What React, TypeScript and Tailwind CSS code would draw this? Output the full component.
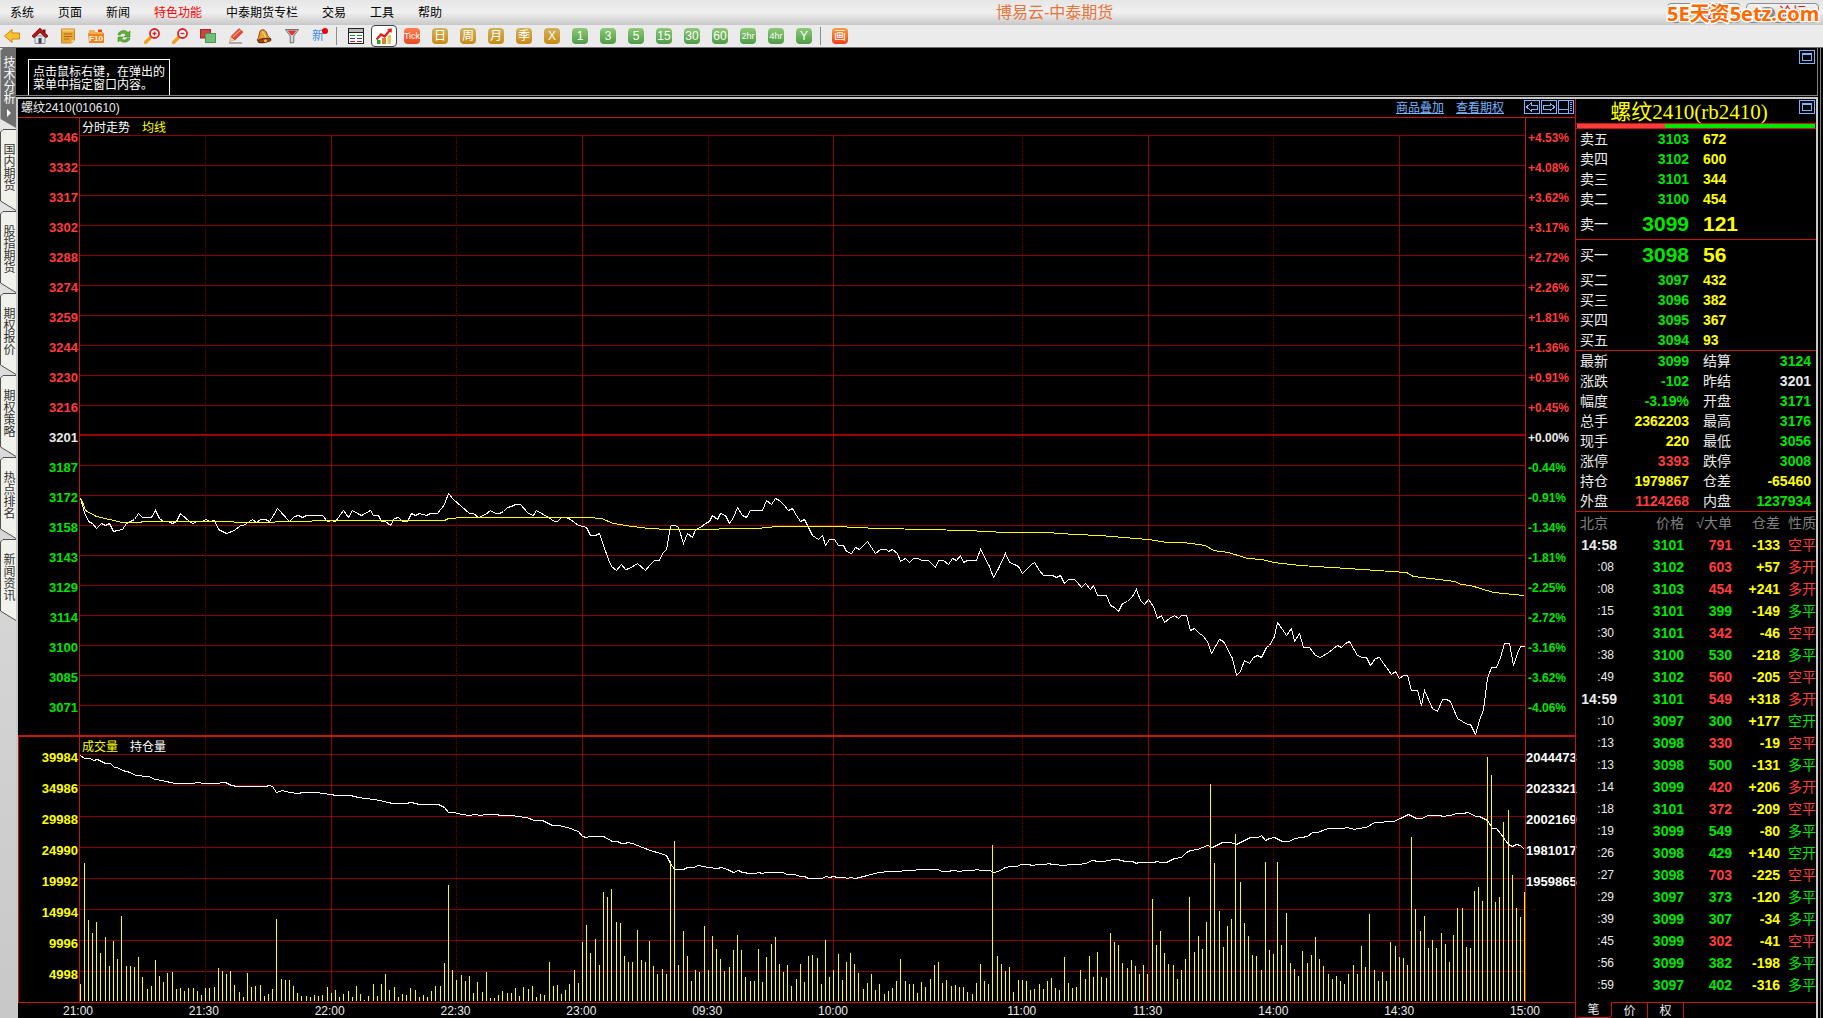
import React, { useState } from 'react';

type Tone = 'up' | 'down' | 'flat' | 'num';

const TONES: Record<Tone, string> = {
  up: 'text-[#ff3c3c]',
  down: 'text-[#00e600]',
  flat: 'text-[#ebebeb]',
  num: 'text-[#ffff00]',
};

const menuItems = ['系统', '页面', '新闻', '特色功能', '中泰期货专栏', '交易', '工具', '帮助'];

const sideTabs = ['国内期货', '股指期货', '期权报价', '期权策略', '热点排名', '新闻资讯'];

const priceScale = [3346, 3332, 3317, 3302, 3288, 3274, 3259, 3244, 3230, 3216, 3201, 3187, 3172, 3158, 3143, 3129, 3114, 3100, 3085, 3071];
const percentScale = ['+4.53%', '+4.08%', '+3.62%', '+3.17%', '+2.72%', '+2.26%', '+1.81%', '+1.36%', '+0.91%', '+0.45%', '+0.00%', '-0.44%', '-0.91%', '-1.34%', '-1.81%', '-2.25%', '-2.72%', '-3.16%', '-3.62%', '-4.06%'];
const volumeScale = [39984, 34986, 29988, 24990, 19992, 14994, 9996, 4998];
const interestScale = [2044473, 2023321, 2002169, 1981017, 1959865];

// minutes = trading minutes until the next label
const timeScale = [
  { label: '21:00', minutes: 30 },
  { label: '21:30', minutes: 30 },
  { label: '22:00', minutes: 30 },
  { label: '22:30', minutes: 30 },
  { label: '23:00', minutes: 30 },
  { label: '09:30', minutes: 30 },
  { label: '10:00', minutes: 45 },
  { label: '11:00', minutes: 30 },
  { label: '11:30', minutes: 30 },
  { label: '14:00', minutes: 30 },
  { label: '14:30', minutes: 30 },
  { label: '15:00', minutes: 0 },
];

const solidLines = [331, 582, 833, 1148, 1399];
const dottedLines = [205, 456, 708, 1022, 1273];

const pricePoints = '80,498 84,512 88,521 92,523 96,528 101,523 105,525 109,523 113,531 117,530 122,529 126,523 134,519 138,513 142,517 151,517 155,510 159,518 163,521 168,521 172,523 176,521 180,513 189,521 192,523 197,521 202,521 205,519 210,521 214,520 218,529 226,533 234,530 240,525 243,525 252,519 256,522 260,519 265,519 269,521 273,515 277,508 289,521 294,516 298,515 302,517 306,515 322,515 327,521 331,520 335,521 343,510 348,517 352,510 357,513 361,515 370,510 373,515 378,515 381,521 385,521 390,525 394,518 398,517 402,521 407,521 411,513 415,515 419,513 426,515 430,513 437,513 444,504 448,493 453,499 469,513 473,513 478,517 485,514 490,510 495,513 499,513 503,511 507,507 511,506 515,504 520,504 528,513 533,515 536,510 541,513 548,517 554,521 557,521 561,517 566,517 570,519 578,525 583,526 586,527 590,535 595,535 599,533 603,545 608,559 611,566 616,570 621,564 625,569 629,568 637,563 645,570 650,564 654,560 659,560 662,553 666,549 670,526 671,525 675,525 678,527 683,543 687,533 692,537 695,529 700,527 705,523 709,521 712,515 717,519 720,513 725,515 729,523 733,517 737,507 742,515 746,517 750,510 762,510 766,500 771,504 775,498 779,500 783,504 788,510 792,508 796,515 800,521 804,519 812,535 818,539 822,535 825,545 829,539 834,539 838,545 843,545 846,551 851,553 855,547 859,549 867,541 875,553 880,549 886,549 888,551 892,549 897,553 900,561 905,558 909,562 913,558 918,558 921,560 928,560 935,567 938,560 943,560 948,564 952,558 956,560 960,555 963,562 967,560 976,560 980,549 989,566 993,577 998,568 1005,553 1009,562 1014,564 1018,566 1022,573 1031,564 1034,562 1039,570 1043,575 1052,575 1056,577 1060,575 1064,583 1068,579 1074,579 1077,582 1081,587 1085,583 1090,589 1093,585 1097,595 1106,595 1110,605 1114,607 1118,611 1122,603 1127,601 1132,596 1136,589 1140,600 1144,604 1148,599 1153,606 1157,618 1161,615 1164,622 1169,618 1174,615 1178,618 1181,615 1186,615 1190,630 1194,628 1199,633 1202,635 1207,641 1211,653 1219,639 1223,641 1232,658 1236,675 1240,671 1244,660 1249,663 1253,657 1257,655 1261,657 1266,647 1269,645 1274,636 1277,622 1282,629 1286,635 1291,628 1294,641 1299,633 1303,647 1309,647 1315,655 1320,657 1328,652 1337,645 1341,647 1345,643 1349,641 1357,655 1362,657 1366,657 1370,665 1375,658 1379,657 1383,663 1386,667 1391,674 1395,671 1399,678 1403,675 1407,675 1411,690 1417,690 1421,705 1424,690 1432,708 1437,711 1442,699 1446,699 1450,701 1457,718 1462,721 1467,724 1470,724 1475,734 1479,720 1483,709 1487,678 1491,667 1496,667 1500,657 1504,643 1509,643 1513,665 1517,653 1520,646 1524,646';

const averagePoints = '80,498 83,504 85,510 96,516 109,519 122,522 140,522 142,521 233,521 234,522 274,522 275,521 311,521 312,520 444,520 448,518 463,517 588,517 601,518 613,523 625,525 648,528 669,529 718,529 719,528 756,528 777,526 836,526 878,528 929,529 962,530 991,531 1000,532 1046,532 1075,534 1100,535 1123,537 1148,539 1167,542 1183,542 1205,545 1213,550 1228,552 1247,558 1262,559 1273,562 1300,565 1347,568 1406,572 1413,576 1455,581 1460,584 1470,585 1493,592 1524,595';

const interestPoints = '80,755 84,758 90,758 93,760 97,759 105,763 110,763 114,767 117,767 122,770 130,772 135,775 148,776 155,779 161,780 175,783 193,783 196,782 204,783 215,783 225,782 231,785 237,786 265,786 269,785 272,786 276,792 282,790 289,792 298,793 302,792 316,792 330,794 336,795 350,795 358,797 380,800 387,802 393,803 405,803 411,802 419,804 438,804 444,807 448,812 454,812 461,814 469,815 474,814 480,815 486,814 496,814 500,815 513,815 516,816 526,817 534,820 542,820 552,825 559,825 570,828 575,830 578,831 582,836 586,837 589,836 603,836 612,841 617,841 621,843 625,843 627,842 632,843 642,847 650,850 660,853 666,855 670,863 674,869 683,869 687,867 693,867 698,865 708,867 717,868 721,867 727,869 733,872 738,870 742,872 750,873 755,873 758,872 762,873 765,872 782,872 787,874 794,874 800,876 804,876 808,878 821,878 826,876 829,877 833,876 837,877 844,877 847,878 850,877 855,878 867,875 878,872 889,871 914,870 917,869 937,869 942,871 948,871 952,870 960,871 963,870 972,870 977,869 980,870 990,870 993,872 998,871 1005,867 1010,866 1016,866 1021,864 1028,864 1032,865 1037,864 1045,864 1048,863 1052,864 1065,865 1068,864 1078,864 1085,863 1092,860 1098,861 1103,861 1113,859 1117,859 1125,861 1132,861 1136,863 1138,862 1153,862 1157,861 1160,862 1166,862 1174,858 1181,857 1186,852 1190,850 1197,849 1207,845 1212,847 1222,842 1230,842 1236,844 1242,841 1250,837 1258,837 1261,835 1265,840 1269,838 1274,837 1282,841 1288,841 1295,838 1307,836 1312,832 1317,832 1328,828 1342,828 1347,827 1354,829 1357,828 1366,827 1374,822 1393,821 1400,818 1408,814 1416,818 1421,818 1428,815 1440,815 1442,816 1450,815 1456,813 1463,813 1467,812 1476,816 1479,816 1487,820 1492,828 1496,828 1500,833 1508,844 1512,846 1516,844 1520,845 1524,849';

// one bar per trading minute
const volumeBars = [
  17, 138, 81, 68, 79, 48, 64, 35, 60, 42, 85, 35, 35, 34, 44, 24, 12, 15, 41, 25, 19, 28, 29, 12, 13, 10, 13, 13, 10, 6,
  13, 13, 14, 33, 30, 27, 30, 16, 9, 4, 28, 14, 15, 16, 5, 7, 12, 82, 22, 21, 21, 15, 8, 5, 5, 4, 6, 5, 6, 14,
  8, 11, 4, 7, 10, 4, 15, 7, 1, 5, 17, 5, 17, 27, 11, 14, 4, 7, 6, 13, 11, 4, 6, 4, 10, 15, 15, 38, 116, 31,
  21, 26, 20, 25, 8, 19, 9, 29, 3, 3, 6, 10, 8, 8, 13, 5, 14, 12, 15, 4, 7, 6, 39, 15, 16, 7, 11, 17, 31, 18,
  59, 76, 48, 62, 36, 109, 104, 112, 79, 78, 45, 39, 39, 71, 41, 39, 60, 35, 27, 32, 27, 140, 160, 36, 70, 45, 20, 31, 29, 75,
  31, 65, 52, 42, 30, 34, 51, 66, 51, 24, 20, 20, 52, 19, 44, 57, 64, 37, 29, 36, 15, 22, 37, 19, 45, 46, 43, 17, 61, 24,
  31, 47, 21, 39, 48, 37, 28, 12, 18, 27, 11, 17, 7, 10, 13, 20, 42, 20, 17, 17, 8, 19, 14, 22, 36, 39, 18, 21, 15, 16,
  14, 14, 9, 7, 18, 37, 20, 17, 156, 45, 37, 30, 34, 9, 21, 21, 20, 11, 12, 17, 12, 20, 23, 13, 11, 44, 18, 13, 14, 31,
  22, 45, 24, 49, 24, 23, 68, 59, 56, 38, 33, 41, 35, 27, 36, 27, 102, 56, 70, 48, 37, 36, 22, 31, 42, 104, 49, 65, 52, 79,
  217, 138, 90, 54, 75, 82, 167, 119, 78, 65, 46, 45, 31, 139, 51, 47, 139, 56, 88, 38, 32, 25, 50, 38, 46, 64, 42, 35, 27, 22,
  25, 20, 17, 27, 36, 27, 55, 34, 87, 31, 20, 29, 20, 59, 55, 44, 43, 36, 164, 92, 70, 85, 53, 61, 53, 68, 57, 39, 66, 93,
  93, 54, 53, 110, 114, 100, 244, 226, 99, 104, 179, 191, 126, 93, 84, 109,
];

const asks = [
  { name: '卖五', price: 3103, volume: 672 },
  { name: '卖四', price: 3102, volume: 600 },
  { name: '卖三', price: 3101, volume: 344 },
  { name: '卖二', price: 3100, volume: 454 },
  { name: '卖一', price: 3099, volume: 121, best: true },
];

const bids = [
  { name: '买一', price: 3098, volume: 56, best: true },
  { name: '买二', price: 3097, volume: 432 },
  { name: '买三', price: 3096, volume: 382 },
  { name: '买四', price: 3095, volume: 367 },
  { name: '买五', price: 3094, volume: 93 },
];

const quotes: [string, string, Tone, string, string, Tone][] = [
  ['最新', '3099', 'down', '结算', '3124', 'down'],
  ['涨跌', '-102', 'down', '昨结', '3201', 'flat'],
  ['幅度', '-3.19%', 'down', '开盘', '3171', 'down'],
  ['总手', '2362203', 'num', '最高', '3176', 'down'],
  ['现手', '220', 'num', '最低', '3056', 'down'],
  ['涨停', '3393', 'up', '跌停', '3008', 'down'],
  ['持仓', '1979867', 'num', '仓差', '-65460', 'num'],
  ['外盘', '1124268', 'up', '内盘', '1237934', 'down'],
];

// time, price, volume, volume tone, position change, nature, nature tone
const ticks: [string, number, number, Tone, string, string, Tone][] = [
  ['14:58', 3101, 791, 'up', '-133', '空平', 'up'],
  [':08', 3102, 603, 'up', '+57', '多开', 'up'],
  [':08', 3103, 454, 'up', '+241', '多开', 'up'],
  [':15', 3101, 399, 'down', '-149', '多平', 'down'],
  [':30', 3101, 342, 'up', '-46', '空平', 'up'],
  [':38', 3100, 530, 'down', '-218', '多平', 'down'],
  [':49', 3102, 560, 'up', '-205', '空平', 'up'],
  ['14:59', 3101, 549, 'up', '+318', '多开', 'up'],
  [':10', 3097, 300, 'down', '+177', '空开', 'down'],
  [':13', 3098, 330, 'up', '-19', '空平', 'up'],
  [':13', 3098, 500, 'down', '-131', '多平', 'down'],
  [':14', 3099, 420, 'up', '+206', '多开', 'up'],
  [':18', 3101, 372, 'up', '-209', '空平', 'up'],
  [':19', 3099, 549, 'down', '-80', '多平', 'down'],
  [':26', 3098, 429, 'down', '+140', '空开', 'down'],
  [':27', 3098, 703, 'up', '-225', '空平', 'up'],
  [':29', 3097, 373, 'down', '-120', '多平', 'down'],
  [':39', 3099, 307, 'down', '-34', '多平', 'down'],
  [':45', 3099, 302, 'up', '-41', '空平', 'up'],
  [':56', 3099, 382, 'down', '-198', '多平', 'down'],
  [':59', 3097, 402, 'down', '-316', '多平', 'down'],
];

const ICONS: { name: string; art: React.ReactNode }[] = [
  { name: '后退', art: <path d="M.5 8 8 1.500V5h7.500v6H8v3.500z" fill="#fbc02d" stroke="#c98a12" /> },
  {
    name: '首页',
    art: (
      <>
        <path d="M3 8h10v7.500H3z" fill="#e4e6ea" stroke="#8b929c" />
        <path d="M11 1.500h2.500V5H11z" fill="#8e1111" />
        <path d="M8 .5.3 8l1.700 1.500L8 4l6 5.500L15.700 8z" fill="#c81e1e" stroke="#8e1111" strokeWidth="1.200" />
        <path d="M6.500 10h3v5.500h-3z" fill="#3c444f" />
      </>
    ),
  },
  {
    name: '公告',
    art: (
      <>
        <path d="M1.500 1h13v11l-3 3h-10z" fill="#e9a93a" stroke="#d08a1c" />
        <path d="M2 1.500h12v2H2z" fill="#f7cf70" />
        <path d="M4 6h8M4 8.500h8M4 11h5" stroke="#a9690f" />
        <path d="m11.500 15 .3-2.700 2.700-.3z" fill="#fbe3a6" />
      </>
    ),
  },
  {
    name: 'F10资料',
    art: (
      <>
        <path d="M0 5h16v10H1z" fill="#f08122" />
        <path d="M1 2h5l1.500 2H15v2H1z" fill="#f6b04e" />
        <path d="M10 1.500h4V4h-4z" fill="#e04b20" />
        <text x="8" y="13" textAnchor="middle" fontSize="8" fontWeight="700" fill="#fff6dd" fontFamily="Liberation Sans">F10</text>
      </>
    ),
  },
  {
    name: '刷新',
    art: (
      <>
        <path d="M2 7C2.500 2.500 9 1 12 4.500l2-1.500v6H8l2-2C8 4.500 5 5 4.500 7z" fill="#5fae35" stroke="#36801c" strokeWidth=".5" />
        <path d="M14 10c-.5 4.500-7 5.500-10 2.500L2 14V9h5.500l-2 1.700c2 2 5 1.500 5.500-.7z" fill="#5fae35" stroke="#36801c" strokeWidth=".5" />
      </>
    ),
  },
  {
    name: '放大',
    art: (
      <>
        <path d="m1.500 14.500 5-5" stroke="#f3a01c" strokeWidth="3.200" strokeLinecap="round" />
        <circle cx="10.500" cy="5.500" r="4.500" fill="#fff" stroke="#e02424" strokeWidth="1.800" />
        <path d="M8.500 5.500h4M10.500 3.500v4" stroke="#e02424" strokeWidth="1.400" />
      </>
    ),
  },
  {
    name: '缩小',
    art: (
      <>
        <path d="m1.500 14.500 5-5" stroke="#f3a01c" strokeWidth="3.200" strokeLinecap="round" />
        <circle cx="10.500" cy="5.500" r="4.500" fill="#fff" stroke="#e02424" strokeWidth="1.800" />
        <path d="M8.500 5.500h4" stroke="#e02424" strokeWidth="1.400" />
      </>
    ),
  },
  {
    name: '叠加',
    art: (
      <>
        <rect x=".5" y="1.500" width="10" height="8.500" fill="#cf4141" stroke="#a12525" />
        <rect x="5.500" y="5.500" width="10" height="9" fill="#71bf78" stroke="#4c9555" />
      </>
    ),
  },
  {
    name: '画线',
    art: (
      <>
        <path d="M1 15h13" stroke="#8d7a72" strokeWidth="1.200" />
        <path d="m1.500 13.500 1.500-5 4 3.500z" fill="#f3cda0" stroke="#b0764a" strokeWidth=".4" />
        <path d="m3 8.500 8-8 4 3.500-8 8z" fill="#e5482f" stroke="#b72a17" strokeWidth=".5" />
        <path d="m5 9 7.500-7" stroke="#f59a83" strokeWidth="1.200" />
      </>
    ),
  },
  {
    name: '预警',
    art: (
      <>
        <path d="M4.500 2.500C8 .5 10 3 11 6c.8 2.500 2 3.500 4 5L4 14.500 1 12C4 9 2.500 5 4.500 2.500z" fill="#eda12e" stroke="#7e420e" />
        <path d="M6 3.500c2 1 3 4 3.500 6.500" stroke="#ffe29a" fill="none" />
        <ellipse cx="8.500" cy="12.500" rx="6.500" ry="2" fill="#a8430f" stroke="#602708" transform="rotate(-8 8.500 12.500)" />
        <circle cx="9.500" cy="12.800" r="1.500" fill="#f6c050" />
      </>
    ),
  },
  {
    name: '过滤',
    art: (
      <>
        <path d="M1.500 1.500h13L9.800 8v6.500L6.200 15V8z" fill="#d5d5d8" stroke="#6f7176" />
        <path d="M3.500 2.500h9L9 7H7z" fill="#e13232" />
      </>
    ),
  },
];

const PERIODS: { label: string; paint: string; size: string }[] = [
  { label: 'Tick', paint: 'from-[#ff7d4d] to-[#e8481c]', size: 'text-[9px]' },
  { label: '日', paint: 'from-[#d2b25a] to-[#c98a06]', size: 'text-[12px]' },
  { label: '周', paint: 'from-[#d2b25a] to-[#c98a06]', size: 'text-[12px]' },
  { label: '月', paint: 'from-[#d2b25a] to-[#c98a06]', size: 'text-[12px]' },
  { label: '季', paint: 'from-[#d2b25a] to-[#c98a06]', size: 'text-[12px]' },
  { label: 'X', paint: 'from-[#d2b25a] to-[#c98a06]', size: 'text-[12px]' },
  { label: '1', paint: 'from-[#8ccb78] to-[#4f9b45]', size: 'text-[12px]' },
  { label: '3', paint: 'from-[#8ccb78] to-[#4f9b45]', size: 'text-[12px]' },
  { label: '5', paint: 'from-[#8ccb78] to-[#4f9b45]', size: 'text-[12px]' },
  { label: '15', paint: 'from-[#8ccb78] to-[#4f9b45]', size: 'text-[12px]' },
  { label: '30', paint: 'from-[#8ccb78] to-[#4f9b45]', size: 'text-[12px]' },
  { label: '60', paint: 'from-[#8ccb78] to-[#4f9b45]', size: 'text-[12px]' },
  { label: '2hr', paint: 'from-[#8ccb78] to-[#4f9b45]', size: 'text-[9px]' },
  { label: '4hr', paint: 'from-[#8ccb78] to-[#4f9b45]', size: 'text-[9px]' },
  { label: 'Y', paint: 'from-[#8ccb78] to-[#4f9b45]', size: 'text-[12px]' },
];

const MenuBar = () => (
  <header className="flex h-[25px] items-center bg-gradient-to-b from-[#e6e6e6] via-[#f0f0f0] to-[#c8c8c8]">
    <nav className="flex gap-6 pl-2.5">
      {menuItems.map(item => (
        <button key={item} className={`leading-4 ${item === '特色功能' ? 'text-[#ff0000]' : 'text-black'}`}>{item}</button>
      ))}
    </nav>
    <h1 className="flex-1 text-center text-[16px] leading-5 text-[#e8743c]">博易云-中泰期货</h1>
    <div className="relative flex gap-[5px] pr-1">
      <button className="flex h-5 w-[74px] items-center justify-center gap-2 rounded-sm border border-[#8c8c8c] bg-gradient-to-b from-[#f4f4f4] to-[#c4c4c4] text-[14px] text-[#d01818]">
        <span className="h-3 w-3 rounded-full bg-[#e3a52a]"></span>登录
      </button>
      <button className="flex h-5 w-[73px] items-center justify-center gap-1 rounded-sm border border-[#8c8c8c] bg-gradient-to-b from-[#f4f4f4] to-[#c4c4c4] text-[14px] text-[#d01818]">
        <span className="h-3 w-4 rounded-full bg-[#8a8a8a]"></span>论坛
      </button>
      <strong className="pointer-events-none absolute inset-x-0 -top-px whitespace-nowrap font-['Open_Sans','Noto_Sans_CJK_SC',sans-serif] text-[20px] leading-6 text-[#ff6a00] [paint-order:stroke] [-webkit-text-stroke:3px_white]">5E天资5etz.com</strong>
    </div>
  </header>
);

const Separator = () => <span className="mr-[11px] ml-2 h-[18px] w-px bg-[#8c8c8c]"></span>;

const Toolbar = () => {
  const [period, setPeriod] = useState('分时');

  return (
    <div className="flex h-[23px] items-center border-b border-[#707070] bg-[#ebebeb] pl-1">
      <div className="flex items-center gap-3">
        {ICONS.map(icon => (
          <button key={icon.name} aria-label={icon.name} className="h-4 w-4">
            <svg viewBox="0 0 16 16" className="h-4 w-4" fill="none">{icon.art}</svg>
          </button>
        ))}
        <button className="relative h-4 w-4 text-left text-[12px] leading-4 text-[#3c8ce8]">
          新
          <span className="absolute top-0 right-0 h-1.5 w-1.5 rounded-full bg-[#f00000]"></span>
        </button>
      </div>
      <Separator />
      <div className="flex items-center gap-3">
        <button aria-label="报价" className="h-4 w-4">
          <svg viewBox="0 0 16 16" className="h-4 w-4" shapeRendering="crispEdges">
            <path d="M.5.5h15v15H.5z" fill="#fff" stroke="#222" />
            <path d="M1 1h14v3H1z" fill="#b9b9b9" />
            <path d="M1 4.500h14" stroke="#222" />
            <path d="M2 7.500h5M9 7.500h5" stroke="#12a012" />
            <path d="M2 10.500h5M9 10.500h5" stroke="#2038c8" />
            <path d="M2 13.500h5M9 13.500h5" stroke="#d01818" />
          </svg>
        </button>
        <button
          aria-label="分时"
          onClick={() => setPeriod('分时')}
          className={`-mx-[5px] flex h-[22px] w-[26px] items-center justify-center rounded border ${period === '分时' ? 'border-[#444444] bg-white' : 'border-transparent'}`}
        >
          <svg viewBox="0 0 16 16" className="h-4 w-4" fill="none">
            <path d="M1 12h3.500v4H1z" fill="#2f9a34" />
            <path d="M6 10h4v6H6z" fill="#e2802a" />
            <path d="M11.500 7H15v9h-3.500z" fill="#e6c85a" />
            <path d="m.5 11.500 4.500-5 3.500 2 6-7" stroke="#e01c1c" strokeWidth="2.200" />
            <path d="m11 1 5-.5-.5 4.500z" fill="#e01c1c" />
          </svg>
        </button>
        {PERIODS.map(p => (
          <button
            key={p.label}
            onClick={() => setPeriod(p.label)}
            className={`flex h-4 w-4 items-center justify-center rounded-sm bg-gradient-to-b leading-4 text-white ${p.paint} ${p.size}`}
          >
            {p.label}
          </button>
        ))}
      </div>
      <Separator />
      <button className="h-4 w-4 rounded-sm bg-gradient-to-b from-[#ff9a3c] to-[#f03c1c] text-[12px] leading-4 text-white">画</button>
    </div>
  );
};

const SideRail = () => (
  <aside className="w-4 shrink-0 bg-gradient-to-b from-[#e8e8e8] to-[#c8c8c8]">
    <button className="relative flex h-[81px] w-4 items-start justify-center pt-2 text-white">
      <svg viewBox="0 0 16 81" className="absolute inset-0 h-full w-full">
        <path d="M.5 2.500 3 0h13v80L.5 71z" fill="#6e6e6e" />
        <path d="m7 61 4 4-4 4z" fill="#fff" />
      </svg>
      <span className="relative leading-3 [writing-mode:vertical-rl]">技术分析</span>
    </button>
    {sideTabs.map(tab => (
      <button key={tab} className="relative flex h-[82px] w-4 items-start justify-center pt-3.5 text-[#333333]">
        <svg viewBox="0 0 16 82" className="absolute inset-0 h-full w-full">
          <path d="M16 .5H3L.5 3v69L16 81.500" fill="#f2f2ec" stroke="#505050" />
        </svg>
        <span className="relative leading-3 [writing-mode:vertical-rl]">{tab}</span>
      </button>
    ))}
  </aside>
);

const MaximizeButton = () => (
  <button aria-label="最大化" className="flex h-3.5 w-4 items-center justify-center border border-[#78b4ff]">
    <span className="h-2 w-2.5 border border-t-2 border-[#78b4ff]"></span>
  </button>
);

const GridLines = ({ rows, top, bottom }: { rows: number[]; top: number; bottom: number }) => (
  <g stroke="#8b0000">
    {rows.map(y => <path key={y} d={`M80 ${y}.5H1525`} />)}
    {solidLines.map(x => <path key={x} d={`M${x}.5 ${top}V${bottom}`} />)}
    {dottedLines.map(x => <path key={x} d={`M${x}.5 ${top}V${bottom}`} strokeDasharray="1 1" stroke="#780000" />)}
  </g>
);

const PriceChart = () => (
  <div className="flex border-b-2 border-[#c8140a]">
    <ol className="w-[61px] shrink-0 pt-[5px] pr-px pb-3 text-right text-[13px] leading-[30px] font-bold">
      {priceScale.map(p => (
        <li key={p} className={p > 3201 ? TONES.up : p < 3201 ? TONES.down : TONES.flat}>{p}</li>
      ))}
    </ol>
    <div className="relative min-w-0 flex-1 border-x border-[#c8140a]">
      <svg viewBox="80 118 1445 617" preserveAspectRatio="none" className="block h-[617px] w-full" fill="none" shapeRendering="crispEdges">
        <GridLines rows={priceScale.map((_, i) => 135 + i * 30)} top={135} bottom={735} />
        <path d="M80 435H1525" stroke="#a00000" strokeWidth="2" />
        <g transform="translate(.5 .5)">
          <polyline points={pricePoints} stroke="#ffffff" />
          <polyline points={averagePoints} stroke="#ffff00" />
        </g>
      </svg>
      <div className="absolute top-0.5 left-0.5 flex gap-3 leading-4 text-white">
        <span>分时走势</span>
        <span className="text-[#ffff00]">均线</span>
      </div>
    </div>
    <ol className="w-[49px] shrink-0 pt-[5px] pl-0.5 leading-[30px] font-bold">
      {percentScale.map((p, i) => (
        <li key={p} className={i < 10 ? TONES.up : i > 10 ? TONES.down : TONES.flat}>{p}</li>
      ))}
    </ol>
  </div>
);

const VolumeChart = () => (
  <div className="flex border-b border-[#c8140a]">
    <ol className="w-[61px] shrink-0 border-l border-[#c8140a] pt-[5px] pr-px pb-3 text-right text-[13px] leading-[31px] font-bold text-[#ffff00]">
      {volumeScale.map(v => <li key={v}>{v}</li>)}
    </ol>
    <div className="relative min-w-0 flex-1 border-x border-[#c8140a]">
      <svg viewBox="80 737 1445 265" preserveAspectRatio="none" className="block h-[265px] w-full" fill="none" shapeRendering="crispEdges">
        <GridLines rows={volumeScale.map((_, i) => 754 + i * 31)} top={737} bottom={1002} />
        <polyline points={interestPoints} transform="translate(.5 .5)" stroke="#ffffff" />
        {volumeBars.map((h, i) => (
          <rect key={i} x={80 + Math.floor(i * 4.188)} y={1001 - h} width="1" height={h} fill="#ffff00" />
        ))}
      </svg>
      <div className="absolute top-0.5 left-0.5 flex gap-3 leading-4 text-white">
        <span className="text-[#ffff00]">成交量</span>
        <span>持仓量</span>
      </div>
    </div>
    <ol className="w-[49px] shrink-0 pt-[5px] text-[13px] leading-[31px] font-bold text-white">
      {interestScale.map(v => <li key={v}>{v}</li>)}
    </ol>
  </div>
);

const ChartPanel = () => (
  <section className="min-w-0 flex-1">
    <div className="flex h-[19px] items-center border-b border-[#c8140a] pr-px pl-[3px]">
      <h2 className="flex-1 leading-4 text-[#ebebeb]">螺纹2410(010610)</h2>
      <div className="flex gap-3 pr-5 leading-4 text-[#78b4ff]">
        <a href="#overlay" className="underline">商品叠加</a>
        <a href="#options" className="underline">查看期权</a>
      </div>
      <div className="flex gap-px self-start pt-px">
        <button aria-label="上一个">
          <svg viewBox="0 0 16 14" className="h-3.5 w-4" fill="none" stroke="#78b4ff" shapeRendering="crispEdges">
            <path d="M.5.5h15v13H.5zM2.500 7 7 3v2h6.500v4H7v2z" />
          </svg>
        </button>
        <button aria-label="下一个">
          <svg viewBox="0 0 16 14" className="h-3.5 w-4" fill="none" stroke="#78b4ff" shapeRendering="crispEdges">
            <path d="M.5.5h15v13H.5zM13.500 7 9 3v2H2.500v4H9v2z" />
          </svg>
        </button>
        <button aria-label="布局">
          <svg viewBox="0 0 16 14" className="h-3.5 w-4" fill="none" stroke="#78b4ff" shapeRendering="crispEdges">
            <path d="M.5.5h15v13H.5zM10.500 1v12M1 9.500h9" />
            <path d="M13 2v10" strokeWidth="2" strokeDasharray="1 1" />
          </svg>
        </button>
      </div>
    </div>
    <PriceChart />
    <VolumeChart />
    <div className="flex h-[15px] overflow-hidden pr-[50px] pl-[60px] leading-[17px] text-[#ebebeb]">
      {timeScale.map(t => (
        <div key={t.label} className="w-0" style={{ flexGrow: t.minutes }}>
          <span className="flex w-0 justify-center">{t.label}</span>
        </div>
      ))}
    </div>
  </section>
);

interface Level {
  name: string;
  price: number;
  volume: number;
  best?: boolean;
}

const OrderBook = ({ levels }: { levels: Level[] }) => (
  <div className="border-b border-[#c8140a]">
    <table className="w-full table-fixed text-[14px] leading-4">
      <colgroup>
        <col className="w-[45px]" />
        <col className="w-[68px]" />
        <col />
      </colgroup>
      <tbody>
        {levels.map(l => (
          <tr key={l.name} className={l.best ? 'h-[30px]' : 'h-5'}>
            <th className="p-0 pl-1 text-left font-normal text-[#ebebeb]">{l.name}</th>
            <td className={`p-0 text-right font-bold text-[#00e600] ${l.best ? 'text-[21px]' : ''}`}>{l.price}</td>
            <td className={`p-0 pl-3.5 font-bold text-[#ffff00] ${l.best ? 'text-[21px]' : ''}`}>{l.volume}</td>
          </tr>
        ))}
      </tbody>
    </table>
  </div>
);

const QuotePanel = () => {
  const [tab, setTab] = useState('笔');

  return (
    <section className="flex w-[241px] shrink-0 flex-col border-l border-[#c8140a]">
      <div className="relative flex h-6 items-center justify-center pr-3.5">
        <h2 className="pt-px font-['Liberation_Serif','Noto_Sans_CJK_SC',serif] text-[21px] leading-6 text-[#ffff00]">螺纹2410(rb2410)</h2>
        <div className="absolute top-px right-px flex">
          <MaximizeButton />
        </div>
      </div>
      <div className="flex h-1.5 border-y border-[#c8140a] px-px">
        <div className="w-[37%] bg-[#ff3c3c]"></div>
        <div className="flex-1 bg-[#00e600]"></div>
      </div>
      <OrderBook levels={asks} />
      <OrderBook levels={bids} />
      <div className="border-b border-[#c8140a]">
        <table className="w-full table-fixed text-[14px] leading-4">
          <colgroup>
            <col className="w-[45px]" />
            <col className="w-[68px]" />
            <col className="w-[50px]" />
            <col />
          </colgroup>
          <tbody>
            {quotes.map(([a, av, at, b, bv, bt]) => (
              <tr key={a} className="h-5">
                <th className="p-0 pl-1 text-left font-normal text-[#ebebeb]">{a}</th>
                <td className={`p-0 text-right font-bold ${TONES[at]}`}>{av}</td>
                <th className="p-0 pl-3.5 text-left font-normal text-[#ebebeb]">{b}</th>
                <td className={`p-0 pr-[5px] text-right font-bold ${TONES[bt]}`}>{bv}</td>
              </tr>
            ))}
          </tbody>
        </table>
      </div>
      <table className="w-full table-fixed text-right text-[14px] leading-4 whitespace-nowrap">
        <colgroup>
          <col className="w-[43px]" />
          <col className="w-[65px]" />
          <col className="w-12" />
          <col className="w-12" />
          <col />
        </colgroup>
        <thead className="text-[#808080]">
          <tr className="h-[22px]">
            <th className="p-0 pl-1 text-left font-normal">北京</th>
            <th className="p-0 font-normal">价格</th>
            <th className="p-0 font-normal">√大单</th>
            <th className="p-0 font-normal">仓差</th>
            <th className="p-0 font-normal">性质</th>
          </tr>
        </thead>
        <tbody>
          {ticks.map(([time, price, volume, vt, change, nature, nt], i) => (
            <tr key={i} className="h-[22px]">
              <td className={`p-0 text-[#ebebeb] ${time.startsWith(':') ? 'pr-[5px] text-[12px]' : 'pr-0.5 font-bold'}`}>{time}</td>
              <td className="p-0 font-bold text-[#00e600]">{price}</td>
              <td className={`p-0 font-bold ${TONES[vt]}`}>{volume}</td>
              <td className="p-0 font-bold text-[#ffff00]">{change}</td>
              <td className={`p-0 ${TONES[nt]}`}>{nature}</td>
            </tr>
          ))}
        </tbody>
      </table>
      <div className="mt-auto flex h-4">
        {['笔', '价', '权'].map(t => (
          <button
            key={t}
            onClick={() => setTab(t)}
            className={`w-9 border-r border-[#c8140a] pt-0.5 leading-[13px] text-[#ebebeb] ${tab === t ? 'rounded-b border-b' : 'border-t'}`}
          >
            {t}
          </button>
        ))}
        <div className="flex-1 border-t border-[#c8140a]"></div>
      </div>
    </section>
  );
};

export default function App() {
  return (
    <div className="flex min-h-screen flex-col bg-black font-['Liberation_Sans','Noto_Sans_CJK_SC',sans-serif] text-[12px]">
      <MenuBar />
      <Toolbar />
      <div className="flex flex-1">
        <SideRail />
        <main className="flex min-w-0 flex-1 flex-col">
          {/* Empty window above the chart */}
          <div className="mb-px flex h-12 items-start justify-between overflow-hidden border-r border-b border-[#808080] pr-0.5 pl-3">
            <p className="mt-[11px] h-10 border border-white px-1 pt-1.5 leading-[13px] text-white">
              点击鼠标右键，在弹出的<br />菜单中指定窗口内容。
            </p>
            <div className="mt-0.5 flex">
              <MaximizeButton />
            </div>
          </div>
          <div className="flex flex-1 border-x-2 border-t-2 border-[#c8c8c8]">
            <ChartPanel />
            <QuotePanel />
          </div>
        </main>
        <div className="w-[5px] shrink-0 pl-0.5">
          <div className="h-full w-px bg-[#808080]"></div>
        </div>
      </div>
    </div>
  );
}
